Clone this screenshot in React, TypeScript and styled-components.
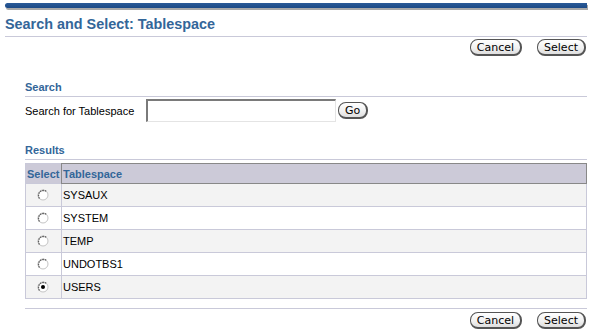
import React from 'react';
import styled, { createGlobalStyle } from 'styled-components';

const GlobalStyle = createGlobalStyle`
	html, body {
		margin: 0;
		padding: 0;
		background: #ffffff;
	}
	body {
		font-family: "Liberation Sans", Arial, sans-serif;
		font-size: 11px;
		color: #000000;
	}
`;

const Page = styled.div`
	width: 594px;
	height: 333px;
	padding: 3px 7px 0 5px;
	box-sizing: border-box;
	overflow: hidden;
`;

const TopBar = styled.div`
	height: 5px;
	background: linear-gradient(#2a5a98, #1c4a86);
	border-radius: 3px 0 0 3px;
	box-shadow: 1px 2px 0 #a8a8a8;
`;

const Title = styled.h1`
	margin: 7px 0 0;
	font-size: 14.4px;
	font-weight: bold;
	color: #336699;
	line-height: 18px;
	padding-bottom: 3px;
	border-bottom: 1px solid #c9c9d9;
`;

const ButtonRow = styled.div<{ $top: number }>`
	display: flex;
	justify-content: flex-end;
	gap: 15px;
	margin-top: ${(p) => p.$top}px;
	padding-right: 1px;
`;

const PillButton = styled.button`
	font-family: "DejaVu Sans", Verdana, sans-serif;
	font-size: 11px;
	height: 17px;
	padding: 0 6px;
	line-height: 13px;
	color: #000;
	background: linear-gradient(#ffffff, #f0f0f0 60%, #dedede);
	border: 1px solid #555;
	border-right-width: 2px;
	border-bottom-width: 2px;
	border-radius: 8px;
	cursor: pointer;
`;

const Section = styled.div<{ $top: number }>`
	margin: ${(p) => p.$top}px 0 0 20px;
`;

const SectionHeader = styled.h2`
	margin: 0;
	font-size: 11px;
	font-weight: bold;
	color: #336699;
	line-height: 14px;
	padding-bottom: 2px;
	border-bottom: 1px solid #c9c9d9;
`;

const SearchRow = styled.div`
	display: flex;
	align-items: center;
	margin-top: 2px;
`;

const Label = styled.label`
	width: 121px;
	font-size: 11px;
`;

const TextInput = styled.input`
	width: 190px;
	height: 23px;
	box-sizing: border-box;
	border: 1px solid #e4e4e4;
	border-top: 2px solid #7a7a7a;
	border-left: 2px solid #7a7a7a;
	background: #ffffff;
	margin-right: 2px;
	padding: 0 3px;
	font-size: 11px;
	font-family: "Liberation Sans", Arial, sans-serif;
`;

const Table = styled.table`
	width: 100%;
	margin-top: 3px;
	border-collapse: collapse;
	border: 1px solid #c9c9d9;
`;

const HeadCell = styled.th<{ $first?: boolean }>`
	height: 19px;
	padding: 0 1px;
	text-align: left;
	font-size: 11px;
	font-weight: bold;
	color: #336699;
	background: #cccad8;
	width: ${(p) => (p.$first ? '33px' : 'auto')};
	border: ${(p) => (p.$first ? 'none' : '1px solid #888')};
`;

const Row = styled.tr<{ $alt: boolean }>`
	background: ${(p) => (p.$alt ? '#f3f3f3' : '#ffffff')};
`;

const Cell = styled.td`
	height: 22px;
	padding: 0 1px;
	font-size: 11px;
	border-top: 1px solid #c9c9d9;
	border-left: 1px solid #c9c9d9;
	text-align: left;
	vertical-align: middle;
`;

const RadioIcon = ({ checked }: { checked: boolean }) => (
	<svg width="12" height="12" viewBox="0 0 12 12" style={{ display: 'block', margin: '0 0 0 10px' }}>
		<circle cx="6" cy="6" r="5" fill="#ffffff" stroke="#c4c4c4" strokeWidth="1" />
		<path d="M2.5 9.5 A5 5 0 0 1 9.5 2.5" fill="none" stroke="#5e5e5e" strokeWidth="1.3" strokeDasharray="1.6 0.8" />
		{checked && <circle cx="6" cy="6" r="2" fill="#000000" />}
	</svg>
);

const Divider = styled.div`
	margin: 9px 0 0 20px;
	border-bottom: 1px solid #c9c9d9;
`;

const rows = ['SYSAUX', 'SYSTEM', 'TEMP', 'UNDOTBS1', 'USERS'];

const App = () => {
	return (
		<>
			<GlobalStyle />
			<Page>
				<TopBar />
				<Title>Search and Select: Tablespace</Title>
				<ButtonRow $top={2}>
					<PillButton>Cancel</PillButton>
					<PillButton>Select</PillButton>
				</ButtonRow>
				<Section $top={24}>
					<SectionHeader>Search</SectionHeader>
					<SearchRow>
						<Label>Search for Tablespace</Label>
						<TextInput type="text" />
						<PillButton>Go</PillButton>
					</SearchRow>
				</Section>
				<Section $top={21}>
					<SectionHeader>Results</SectionHeader>
					<Table>
						<thead>
							<tr>
								<HeadCell $first>Select</HeadCell>
								<HeadCell>Tablespace</HeadCell>
							</tr>
						</thead>
						<tbody>
							{rows.map((name, i) => (
								<Row key={name} $alt={i % 2 === 0}>
									<Cell>
										<RadioIcon checked={name === 'USERS'} />
									</Cell>
									<Cell>{name}</Cell>
								</Row>
							))}
						</tbody>
					</Table>
				</Section>
				<Divider />
				<ButtonRow $top={3}>
					<PillButton>Cancel</PillButton>
					<PillButton>Select</PillButton>
				</ButtonRow>
			</Page>
		</>
	);
};

export default App;
